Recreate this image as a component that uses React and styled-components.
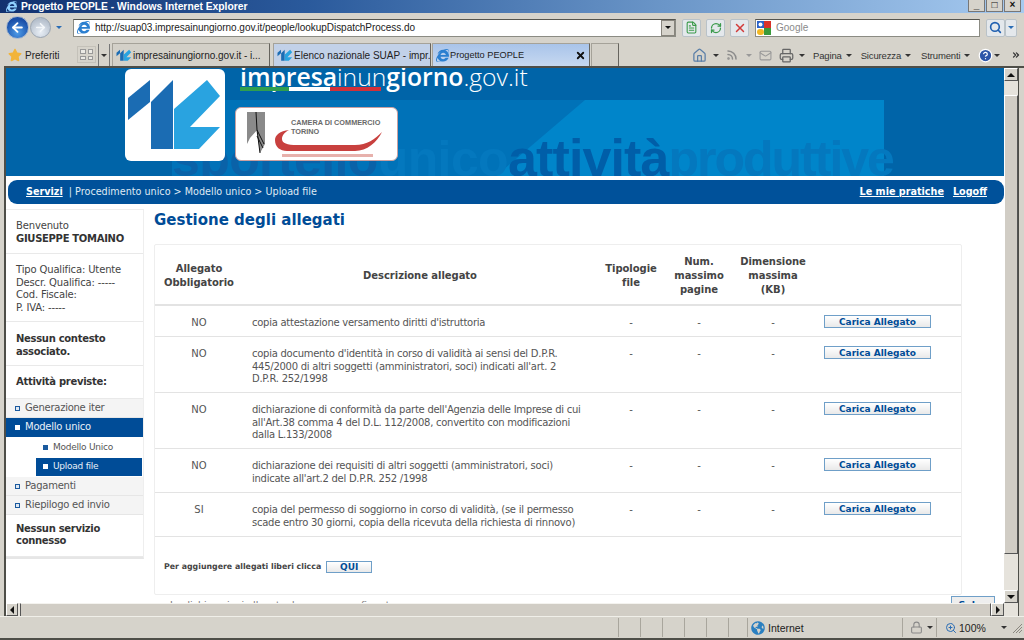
import React from 'react'
import styled, { createGlobalStyle } from 'styled-components'
import { ArrowLeft, ArrowRight, X, Search, Rss, Mail, Printer, Home, HelpCircle, RefreshCw, FileText, Lock, ZoomIn, ChevronsRight } from 'lucide-react'
import { FaInternetExplorer, FaStar, FaGlobeAmericas } from 'react-icons/fa'

const Global = createGlobalStyle`
  html, body { margin: 0; padding: 0; background: #d4d0c8; }
  * { box-sizing: border-box; }
`
const UI = `"Liberation Sans", Arial, sans-serif`
const WEB = `"DejaVu Sans", Verdana, sans-serif`

const Window = styled.div`
  width: 1024px;
  height: 640px;
  overflow: hidden;
  display: flex;
  flex-direction: column;
  background: #d6d3cb;
  font-family: ${UI};
`
const TitleBar = styled.div`
  height: 13px;
  flex: none;
  display: flex;
  align-items: center;
  justify-content: space-between;
  padding: 0 3px 0 6px;
  background: linear-gradient(90deg, #12316f 0%, #2a5a9c 30%, #6b96c8 65%, #a6caf0 100%);
  overflow: hidden;
`
const TitleText = styled.span`
  display: flex;
  align-items: center;
  gap: 4px;
  color: #fff;
  font: bold 10.3px ${UI};
`
const WinButtons = styled.div`
  display: flex;
  gap: 1px;
`
const WinButton = styled.span`
  width: 17px;
  height: 13px;
  margin-top: -2px;
  background: #d6d3cb;
  border: 1px solid #777;
  color: #111;
  font: bold 10px/10px ${UI};
  text-align: center;
`
const NavRow = styled.div`
  height: 29px;
  flex: none;
  display: flex;
  align-items: center;
  padding: 0 0 0 6px;
  background: #d6d3cb;
`
const Circle = styled.span`
  flex: none;
  display: flex;
  align-items: center;
  justify-content: center;
  border-radius: 50%;
  width: ${p => (p.$back ? 23 : 21)}px;
  height: ${p => (p.$back ? 23 : 21)}px;
  margin-right: ${p => (p.$back ? 1 : 2)}px;
  background: ${p => (p.$back
    ? 'radial-gradient(circle at 50% 75%, #4d9be8, #1a4fa8 70%)'
    : 'radial-gradient(circle at 50% 75%, #e8eef5, #b5bfcc 75%)')};
  border: 1px solid ${p => (p.$back ? '#a9b9cf' : '#9aa5b2')};
  color: ${p => (p.$back ? '#fff' : '#f4f7fa')};
`
const SmallArrow = styled.span`
  flex: none;
  width: 0;
  height: 0;
  margin: ${p => p.$m || '0 4px'};
  border-left: 3px solid transparent;
  border-right: 3px solid transparent;
  border-top: 3px solid ${p => p.$c || '#333'};
`
const AddressBox = styled.div`
  width: 603px;
  height: 18px;
  margin-left: 6px;
  flex: none;
  display: flex;
  align-items: center;
  background: #fff;
  border: 1px solid #8b8b83;
  border-top-color: #55554f;
  padding-left: 3px;
  color: #222;
  font: 10px ${UI};
`
const AddressText = styled.span`
  flex: 1;
  margin-left: 5px;
  letter-spacing: -0.04px;
`
const DropButton = styled.span`
  width: 14px;
  height: 16px;
  display: flex;
  align-items: center;
  justify-content: center;
  background: #d6d3cb;
  border: 1px solid #88857d;
`
const ToolButton = styled.span`
  flex: none;
  width: ${p => p.$w || 19}px;
  height: 18px;
  margin-left: ${p => p.$ml ?? 5}px;
  display: flex;
  align-items: center;
  justify-content: center;
  background: #e4e8ec;
  border: 1px solid #b9c2c8;
  border-radius: 2px;
  color: ${p => p.$c || '#3a9a4a'};
`
const SearchBox = styled.div`
  width: 225px;
  height: 18px;
  margin-left: 6px;
  flex: none;
  display: flex;
  align-items: center;
  gap: 4px;
  background: #fff;
  border: 1px solid #8b8b83;
  border-top-color: #55554f;
  color: #8a8a8a;
  font: 10px ${UI};
`
const GoogleMark = styled.svg`
  flex: none;
`
const FavRow = styled.div`
  height: 24px;
  flex: none;
  display: flex;
  align-items: flex-end;
  padding-left: 8px;
  background: #d6d3cb;
  font-size: 10px;
  color: #222;
`
const FavLabel = styled.span`
  width: 69px;
  flex: none;
  height: 22px;
  display: flex;
  align-items: center;
  gap: 3px;
`
const QuickTabs = styled.span`
  width: 19px;
  height: 17px;
  flex: none;
  margin-bottom: 3px;
  display: grid;
  grid-template-columns: 1fr 1fr;
  gap: 2px;
  padding: 2px;
  border: 1px solid #c4c1b9;
`
const QuickCell = styled.i`
  border: 1px solid #999;
  background: #ecebe6;
`
const TabList = styled.div`
  width: 12px;
  height: 22px;
  margin: 0 2px 0 2px;
  flex: none;
  display: flex;
  align-items: center;
  justify-content: center;
  border-left: 1px solid #777;
  border-right: 1px solid #777;
`
const Tab = styled.div`
  flex: none;
  width: ${p => p.$w || 158}px;
  margin-right: ${p => p.$mr || 0}px;
  height: 23px;
  display: flex;
  align-items: center;
  gap: 1px;
  padding: 0 3px 0 3px;
  border: 1px solid #a5a299;
  border-right-color: #66645e;
  border-bottom: 0;
  background: ${p => p.$bg || '#d3d0c8'};
  white-space: nowrap;
  overflow: hidden;
  svg { flex: none; }
`
const TabText = styled.span`
  flex: 1;
  min-width: 0;
  font-size: ${p => p.$fs || 10}px;
  color: #222;
`
const Tools = styled.div`
  margin-left: 73px;
  height: 22px;
  display: flex;
  align-items: center;
  color: #333;
  svg { flex: none; }
`
const ToolLabel = styled.span`
  font-size: 9.5px;
  color: #333;
  letter-spacing: -0.15px;
`
const Frame = styled.div`
  flex: 1;
  min-height: 0;
  display: flex;
  margin-left: 4px;
  border-left: 2px solid #4e4e48;
  border-top: 2px solid #4e4e48;
`
const Stage = styled.div`
  width: 998px;
  flex: none;
  display: flex;
  flex-direction: column;
`
const Page = styled.div`
  flex: 1;
  min-height: 0;
  overflow: hidden;
  background: #fff;
  font-family: ${WEB};
`
const Banner = styled.div`
  position: relative;
  height: 108px;
  overflow: hidden;
  display: flex;
  padding: 1px 0 0 119px;
  background: #0064a8;
`
const BannerArt = styled.svg`
  position: absolute;
  left: 0;
  top: 0;
`
const Watermark = styled.text`
  font: bold 50px "Liberation Sans", sans-serif;
  letter-spacing: -0.6px;
`
const LogoTile = styled.div`
  position: relative;
  flex: none;
  width: 100px;
  height: 92px;
  border-radius: 6px;
  background: #fff;
`
const BrandColumn = styled.div`
  position: relative;
  margin-left: 15px;
  display: flex;
  flex-direction: column;
  align-items: flex-start;
`
const Brand = styled.div`
  height: 20px;
  margin-top: -5px;
  color: #fff;
  font: 300 24.7px/25px "Open Sans", sans-serif;
  white-space: nowrap;
  b { font-weight: 600; }
`
const FlagBar = styled.div`
  margin-top: 3px;
  height: 5px;
  width: 141px;
  display: flex;
`
const FlagPiece = styled.i`
  height: 4px;
  width: ${p => p.$w}px;
  background: ${p => p.$c};
`
const CameraCard = styled.div`
  margin: 15px 0 0 -5px;
  width: 163px;
  height: 54px;
  display: flex;
  background: #fff;
  border: 1px solid #c9a0a0;
  border-radius: 6px;
`
const CameraName = styled.div`
  margin: 10px 0 0 0;
  color: #6a6a6a;
  font: bold 7.3px/9px ${UI};
  white-space: nowrap;
`
const Swoosh = styled.svg`
  display: block;
  margin: -6px 0 0 -16px;
`
const Crumbs = styled.div`
  height: 24px;
  margin: 4px 0 5px 2px;
  padding: 0 17px 1px 18px;
  display: flex;
  align-items: center;
  justify-content: space-between;
  background: #00519a;
  border-radius: 9px;
  color: #dfe9f3;
  font: 9.65px ${WEB};
  white-space: nowrap;
`
const CrumbLink = styled.a`
  color: #fff;
  font-weight: bold;
  text-decoration: underline;
  margin-left: ${p => p.$ml || 0}px;
`
const Body = styled.div`
  display: flex;
  align-items: flex-start;
`
const Side = styled.aside`
  flex: none;
  width: 138px;
  border-top: 1px solid #eee;
  border-right: 1px solid #eee;
  border-bottom: 2px solid #e6e6e6;
  color: #444;
  font-size: 10px;
  line-height: 12.5px;
  letter-spacing: -0.15px;
`
const SideBlock = styled.div`
  padding: ${p => p.$pad || '10px 10px 7px'};
  border-bottom: 1px solid #e9e9e9;
  b { color: #333; letter-spacing: -0.3px; }
`
const SideTitle = styled.b`
  display: block;
  font-size: 10px;
  line-height: 12.5px;
  color: #333;
  letter-spacing: -0.2px;
`
const MenuItem = styled.div`
  height: ${p => p.$h || 19}px;
  display: flex;
  align-items: center;
  gap: 5px;
  margin: ${p => (p.$sub ? `0 1px ${p.$on ? 1 : 0}px 30px` : '0')};
  padding: 1px 0 0 ${p => (p.$sub ? 7 : 9)}px;
  background: ${p => (p.$on ? '#004c97' : p.$sub ? '#fff' : '#f4f4f4')};
  border-bottom: 1px solid ${p => (p.$on || p.$sub ? 'transparent' : '#e6e6e6')};
  color: ${p => (p.$on ? '#e8f0f8' : '#555')};
  font-size: ${p => (p.$sub ? 9 : 10)}px;
  letter-spacing: -0.25px;
`
const Bullet = styled.i`
  flex: none;
  width: 5px;
  height: 5px;
  border: 1px solid ${p => (p.$on ? '#fff' : '#1b5a9e')};
  background: ${p => (p.$on ? '#fff' : p.$solid ? '#1b5a9e' : '#dfe9f3')};
`
const Main = styled.main`
  flex: none;
  width: 841px;
  margin-left: 10px;
`
const Heading = styled.h1`
  margin: 0 0 13px;
  height: 22px;
  color: #004c97;
  font: bold 15px/22px ${WEB};
`
const Card = styled.div`
  width: 808px;
  height: 351px;
  border: 1px solid #eee;
  border-radius: 2px;
  color: #555;
  font-size: 10px;
  line-height: 12.5px;
`
const Row = styled.div`
  display: grid;
  grid-template-columns: 88px 354px 68px 68px 80px 1fr;
  min-height: ${p => p.$h}px;
  height: ${p => p.$h}px;
  align-items: ${p => (p.$head ? 'center' : 'start')};
  padding-top: ${p => (p.$head ? 2 : 11)}px;
  border-bottom: ${p => (p.$head ? 2 : 1)}px solid #e3e3e3;
`
const HeadCell = styled.div`
  color: #444;
  font-weight: bold;
  font-size: 10px;
  letter-spacing: -0.05px;
  line-height: 14px;
  text-align: center;
`
const Cell = styled.div`
  text-align: center;
`
const DescCell = styled.div`
  padding-left: 9px;
  letter-spacing: -0.26px;
`
const ActionCell = styled.div`
  padding-left: 11px;
  margin-top: -2px;
`
const UploadButton = styled.button`
  display: block;
  width: ${p => p.$w || 107}px;
  height: ${p => p.$h || 13}px;
  padding: 0;
  border: 1px solid #6f9fc8;
  background: linear-gradient(#fff, #e9e9e9);
  color: #004c97;
  font: bold 9px/10px ${WEB};
`
const Extra = styled.div`
  display: flex;
  align-items: center;
  gap: 5px;
  padding: 24px 0 0 9px;
  color: #444;
  font-size: 7.85px;
  font-weight: bold;
`
const Below = styled.div`
  display: flex;
  justify-content: space-between;
  margin-top: 1px;
  color: #777;
  font-size: 9.5px;
`
const BelowText = styled.span`
  margin: 3px 0 0 16px;
`
const SaveButton = styled.button`
  width: 44px;
  height: 16px;
  padding: 0;
  border: 1px solid #6f9fc8;
  background: #eee;
  color: #004c97;
  font: bold 9.5px ${WEB};
`
const VBar = styled.div`
  flex: none;
  width: 15px;
  margin-right: 5px;
  padding-bottom: 14px;
  display: flex;
  flex-direction: column;
  background: #e6e3dc;
  border-right: 1px solid #4e4e48;
`
const ScrollArrow = styled.div`
  flex: none;
  width: ${p => p.$w || 14}px;
  height: ${p => p.$h || 13}px;
  display: flex;
  align-items: center;
  justify-content: center;
  background: #d6d3cb;
  border: 1px solid #fff;
  border-right-color: #555;
  border-bottom-color: #555;
`
const Tri = styled.i`
  width: 0;
  height: 0;
  border-style: solid;
  border-color: transparent;
  border-width: ${p => (p.$d === 'u' ? '0 4px 4px' : p.$d === 'd' ? '4px 4px 0' : p.$d === 'l' ? '4px 4px 4px 0' : '4px 0 4px 4px')};
  ${p => ({ u: 'border-bottom-color', d: 'border-top-color', l: 'border-right-color', r: 'border-left-color' }[p.$d])}: #111;
`
const VThumb = styled.div`
  flex: 1;
  margin: 14px 0 36px;
  background: #d1cdc5;
  border: 1px solid #fff;
  border-right-color: #555;
  border-bottom-color: #555;
`
const HBar = styled.div`
  height: 14px;
  flex: none;
  display: flex;
  background: #e6e3dc;
  border-bottom: 1px solid #4e4e48;
`
const HThumb = styled.div`
  flex: 1;
  margin-left: 2px;
  background: #d1cdc5;
  border-top: 1px solid #f4f3ef;
  border-left: 1px solid #555;
  border-right: 1px solid #555;
`
const Status = styled.div`
  height: 24px;
  flex: none;
  margin-top: -1px;
  display: flex;
  align-items: center;
  padding: 2px 0 2px 4px;
  background: #d6d3cb;
  border-top: 1px solid #f0efe9;
  border-bottom: 2px solid #4e4e48;
  font-size: 10.5px;
  color: #222;
`
const StatusCell = styled.div`
  flex: none;
  width: ${p => p.$w}px;
  height: 19px;
  display: flex;
  align-items: center;
  gap: ${p => p.$gap || 3}px;
  padding-left: ${p => p.$pl || 0}px;
  border-right: ${p => (p.$last ? 0 : 1)}px solid #a9a69d;
`
const Grip = styled.svg`
  margin-left: auto;
  margin-right: 1px;
`

const LogoMark = ({ size = 100 }) => (
  <svg width={size} height={size * 0.92} viewBox="0 0 100 92">
    <polygon points="3,29 25,11 25,33 3,51" fill="#1b6cb3" />
    <polygon points="26,33 48,11 48,80 26,80" fill="#1b6cb3" />
    <polygon points="49,40 82,11 95,27 65,58 95,58 74,80 49,80" fill="#29a3e0" />
  </svg>
)

const rows = [
  { h: 31, need: 'NO', text: ["copia attestazione versamento diritti d'istruttoria"] },
  { h: 56, need: 'NO', text: ["copia documento d'identità in corso di validità ai sensi del D.P.R.", "445/2000 di altri soggetti (amministratori, soci) indicati all'art. 2", 'D.P.R. 252/1998'] },
  { h: 56, need: 'NO', text: ["dichiarazione di conformità da parte dell'Agenzia delle Imprese di cui", "all'Art.38 comma 4 del D.L. 112/2008, convertito con modificazioni", 'dalla L.133/2008'] },
  { h: 44, need: 'NO', text: ['dichiarazione dei requisiti di altri soggetti (amministratori, soci)', "indicate all'art.2 del D.P.R. 252 /1998"] },
  { h: 44, need: 'SI', text: ['copia del permesso di soggiorno in corso di validità, (se il permesso', 'scade entro 30 giorni, copia della ricevuta della richiesta di rinnovo)'] },
]

export default function App() {
  return (
    <Window>
      <Global />
      <TitleBar>
        <TitleText><FaInternetExplorer size={11} color="#8fd0ff" />Progetto PEOPLE - Windows Internet Explorer</TitleText>
        <WinButtons>
          <WinButton>_</WinButton>
          <WinButton>□</WinButton>
          <WinButton>×</WinButton>
        </WinButtons>
      </TitleBar>

      <NavRow>
        <Circle $back><ArrowLeft size={15} strokeWidth={3} /></Circle>
        <Circle><ArrowRight size={13} strokeWidth={3} /></Circle>
        <SmallArrow $c="#2a6db5" $m="0 5px 0 3px" />
        <AddressBox>
          <FaInternetExplorer size={13} color="#2b7fd0" />
          <AddressText>http://suap03.impresainungiorno.gov.it/people/lookupDispatchProcess.do</AddressText>
          <DropButton><SmallArrow $m="0" $c="#111" /></DropButton>
        </AddressBox>
        <ToolButton $ml={6}><FileText size={13} /></ToolButton>
        <ToolButton><RefreshCw size={12} strokeWidth={2.5} /></ToolButton>
        <ToolButton $c="#d23a3a"><X size={14} strokeWidth={2.5} /></ToolButton>
        <SearchBox>
          <GoogleMark width="16" height="16" viewBox="0 0 16 16">
            <rect x="1" y="1" width="7" height="7" fill="#2a62c8" />
            <rect x="8" y="1" width="7" height="7" fill="#d8322a" />
            <rect x="8" y="8" width="7" height="7" fill="#3a9a3a" />
            <rect x="1" y="9" width="7" height="6" rx="3" fill="#f2b822" />
            <circle cx="4.5" cy="4.5" r="2" fill="#fff" />
          </GoogleMark>
          Google
        </SearchBox>
        <ToolButton $ml={6} $c="#1f5fb0"><Search size={13} strokeWidth={3} /></ToolButton>
        <ToolButton $ml={0} $w={12} $c="#333"><SmallArrow $m="0" $c="#2a6db5" /></ToolButton>
      </NavRow>

      <FavRow>
        <FavLabel><FaStar size={14} color="#f2b43a" />Preferiti</FavLabel>
        <QuickTabs><QuickCell /><QuickCell /><QuickCell /><QuickCell /></QuickTabs>
        <TabList><SmallArrow $m="0" /></TabList>
        <Tab $mr={3}><LogoMark size={16} /><TabText>impresainungiorno.gov.it - i...</TabText></Tab>
        <Tab $bg="#c2d1e8" $mr={1}><LogoMark size={16} /><TabText>Elenco nazionale SUAP - impr...</TabText></Tab>
        <Tab $bg="linear-gradient(#a9c4ea, #c6d8f0)" $mr={1}>
          <FaInternetExplorer size={13} color="#2b7fd0" />
          <TabText $fs={9.2}>Progetto PEOPLE</TabText>
          <X size={11} strokeWidth={4} color="#111" />
        </Tab>
        <Tab $w={28} />
        <Tools>
          <Home size={15} color="#5a7fa8" />
          <SmallArrow $m="0 7px 0 6px" />
          <Rss size={12} color="#8c8c8c" strokeWidth={3} />
          <SmallArrow $m="0 7px 0 8px" $c="#999" />
          <Mail size={13} color="#999" />
          <Printer size={15} color="#666" style={{ marginLeft: 7 }} />
          <SmallArrow $m="0 8px 0 5px" />
          <ToolLabel>Pagina</ToolLabel>
          <SmallArrow $m="0 9px 0 4px" />
          <ToolLabel>Sicurezza</ToolLabel>
          <SmallArrow $m="0 10px 0 4px" />
          <ToolLabel>Strumenti</ToolLabel>
          <SmallArrow $m="0 8px 0 4px" />
          <HelpCircle size={15} color="#fff" fill="#2d55a8" />
          <SmallArrow $m="0 11px 0 1px" />
          <ChevronsRight size={10} strokeWidth={3} />
        </Tools>
      </FavRow>

      <Frame>
        <Stage>
          <Page>
            <Banner>
              <BannerArt width="998" height="108">
                <rect x="166" y="32" width="712" height="76" fill="#0072b8" />
                <polygon points="579,32 878,32 878,108 490,108" fill="#0085ca" />
                <Watermark x="166" y="108" fill="#0a62a8">
                  sportello<tspan fill="#0478be">unico</tspan>
                  <tspan fill="#005ea8" fontSize="52" letterSpacing="-0.9">attività</tspan>
                  <tspan fill="#0478be" letterSpacing="-2">produttive</tspan>
                </Watermark>
              </BannerArt>
              <LogoTile><LogoMark /></LogoTile>
              <BrandColumn>
                <Brand><b>impresa</b>inun<b>giorno</b>.gov.it</Brand>
                <FlagBar>
                  <FlagPiece $w={49} $c="#2f9e4f" />
                  <FlagPiece $w={41} $c="#fff" />
                  <FlagPiece $w={51} $c="#d23038" />
                </FlagBar>
                <CameraCard>
                  <svg width="55" height="52" viewBox="0 0 55 52">
                    <polygon points="11,4 29,4 29,36 24,45 21,22 14,30 11,36" fill="#8a8a8a" />
                    <path d="M20 4 L21 22 L24 45 M21 22 L28 36 M21 28 L27 40" stroke="#111" strokeWidth="1" fill="none" />
                  </svg>
                  <div>
                    <CameraName>CAMERA DI COMMERCIO<br />TORINO</CameraName>
                    <Swoosh width="110" height="30" viewBox="0 0 110 30">
                      <path d="M14 0 C5 1 0 5 0 10 C0 17 5 21 12 21 L80 21 C92 21 102 12 107 2 C100 9 92 15 80 15 L22 15 C12 15 7 13 7 9 C7 5 10 2 14 0Z" fill="#c8403e" />
                      <rect x="7" y="24" width="91" height="3" fill="#e7b1ac" />
                    </Swoosh>
                  </div>
                </CameraCard>
              </BrandColumn>
            </Banner>

            <Crumbs>
              <span><CrumbLink>Servizi</CrumbLink>&nbsp; | Procedimento unico &gt; Modello unico &gt; Upload file</span>
              <span><CrumbLink>Le mie pratiche</CrumbLink><CrumbLink $ml={9}>Logoff</CrumbLink></span>
            </Crumbs>

            <Body>
              <Side>
                <SideBlock $pad="10px 10px 8px">Benvenuto<br /><b>GIUSEPPE TOMAINO</b></SideBlock>
                <SideBlock>Tipo Qualifica: Utente<br />Descr. Qualifica: -----<br />Cod. Fiscale:<br />P. IVA: -----</SideBlock>
                <SideBlock $pad="11px 10px 7px"><SideTitle>Nessun contesto associato.</SideTitle></SideBlock>
                <SideBlock $pad="10px 10px 9px"><SideTitle>Attività previste:</SideTitle></SideBlock>
                <MenuItem><Bullet />Generazione iter</MenuItem>
                <MenuItem $on><Bullet $on />Modello unico</MenuItem>
                <MenuItem $sub $h={21}><Bullet $solid />Modello Unico</MenuItem>
                <MenuItem $sub $on $h={18}><Bullet $on />Upload file</MenuItem>
                <MenuItem><Bullet />Pagamenti</MenuItem>
                <MenuItem><Bullet />Riepilogo ed invio</MenuItem>
                <SideBlock $pad="8px 10px 8px"><SideTitle>Nessun servizio connesso</SideTitle></SideBlock>
              </Side>
              <Main>
                <Heading>Gestione degli allegati</Heading>
                <Card>
                  <Row $head $h={61}>
                    <HeadCell>Allegato<br />Obbligatorio</HeadCell>
                    <HeadCell>Descrizione allegato</HeadCell>
                    <HeadCell>Tipologie<br />file</HeadCell>
                    <HeadCell>Num.<br />massimo<br />pagine</HeadCell>
                    <HeadCell>Dimensione<br />massima<br />(KB)</HeadCell>
                    <span />
                  </Row>
                  {rows.map(r => (
                    <Row key={r.text[0]} $h={r.h}>
                      <Cell>{r.need}</Cell>
                      <DescCell>{r.text.map(t => <div key={t}>{t}</div>)}</DescCell>
                      <Cell>-</Cell>
                      <Cell>-</Cell>
                      <Cell>-</Cell>
                      <ActionCell><UploadButton>Carica Allegato</UploadButton></ActionCell>
                    </Row>
                  ))}
                  <Extra>Per aggiungere allegati liberi clicca <UploadButton $w={46} $h={12}>QUI</UploadButton></Extra>
                </Card>
                <Below>
                  <BelowText>Le dichiarazioni allegate devono essere firmate</BelowText>
                  <SaveButton>Salva</SaveButton>
                </Below>
              </Main>
            </Body>
          </Page>
          <HBar>
            <ScrollArrow $w={12}><Tri $d="l" /></ScrollArrow>
            <HThumb />
            <ScrollArrow $w={13}><Tri $d="r" /></ScrollArrow>
          </HBar>
        </Stage>
        <VBar>
          <ScrollArrow><Tri $d="u" /></ScrollArrow>
          <VThumb />
          <ScrollArrow><Tri $d="d" /></ScrollArrow>
        </VBar>
      </Frame>

      <Status>
        <StatusCell $w={615} />
        <StatusCell $w={22} />
        <StatusCell $w={22} />
        <StatusCell $w={22} />
        <StatusCell $w={22} />
        <StatusCell $w={22} />
        <StatusCell $w={19} />
        <StatusCell $w={155} $pl={3}><FaGlobeAmericas size={14} color="#2a7fc0" />Internet</StatusCell>
        <StatusCell $w={34} $pl={7} $gap={1}><Lock size={13} color="#8a8a8a" /><SmallArrow $m="0 0 0 3px" /></StatusCell>
        <StatusCell $w={73} $pl={8} $gap={2} $last><ZoomIn size={12} color="#2a6db5" />100%<SmallArrow $m="0 0 0 13px" /></StatusCell>
        <Grip width="12" height="12" viewBox="0 0 12 12"><path d="M11 2 L2 11 M11 5 L5 11 M11 8 L8 11" stroke="#8a877f" strokeWidth="1" /></Grip>
      </Status>
    </Window>
  )
}
